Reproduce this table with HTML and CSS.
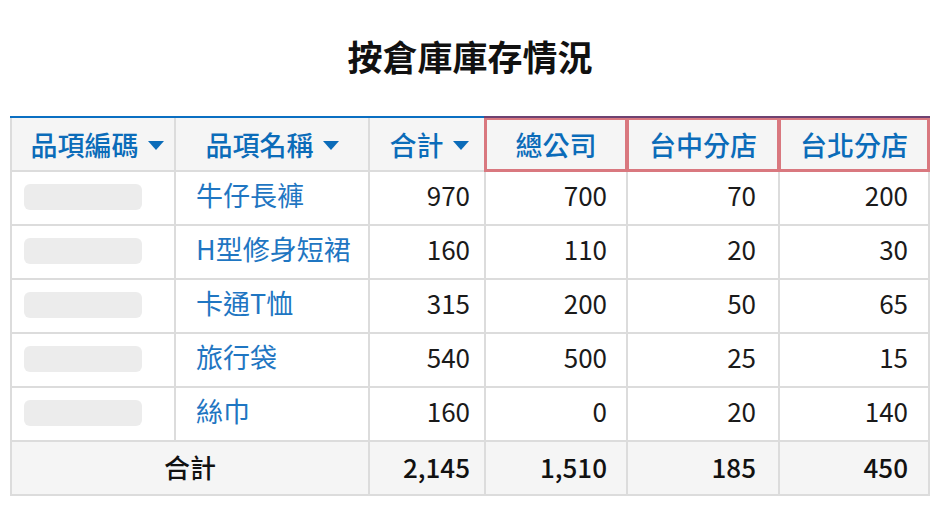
FILE: index.html
```html
<!DOCTYPE html>
<html lang="zh-Hant">
<head>
<meta charset="utf-8">
<title>按倉庫庫存情況</title>
<link rel="stylesheet" href="styles.css">
</head>
<body>
<div class="page">
  <h1 class="title">按倉庫庫存情況</h1>
  <div class="sheet">
    <div class="hd first">品項編碼<span class="caret"></span></div>
    <div class="hd">品項名稱<span class="caret"></span></div>
    <div class="hd third">合計<span class="caret"></span></div>
    <div class="hd hl">總公司</div>
    <div class="hd hl">台中分店</div>
    <div class="hd hl">台北分店</div>

    <div class="cell code"><span class="ph"></span></div>
    <div class="cell name">牛仔長褲</div>
    <div class="cell num c3">970</div>
    <div class="cell num c4">700</div>
    <div class="cell num c5">70</div>
    <div class="cell num c6">200</div>

    <div class="cell code"><span class="ph"></span></div>
    <div class="cell name">H型修身短裙</div>
    <div class="cell num c3">160</div>
    <div class="cell num c4">110</div>
    <div class="cell num c5">20</div>
    <div class="cell num c6">30</div>

    <div class="cell code"><span class="ph"></span></div>
    <div class="cell name">卡通T恤</div>
    <div class="cell num c3">315</div>
    <div class="cell num c4">200</div>
    <div class="cell num c5">50</div>
    <div class="cell num c6">65</div>

    <div class="cell code"><span class="ph"></span></div>
    <div class="cell name">旅行袋</div>
    <div class="cell num c3">540</div>
    <div class="cell num c4">500</div>
    <div class="cell num c5">25</div>
    <div class="cell num c6">15</div>

    <div class="cell code"><span class="ph"></span></div>
    <div class="cell name">絲巾</div>
    <div class="cell num c3">160</div>
    <div class="cell num c4">0</div>
    <div class="cell num c5">20</div>
    <div class="cell num c6">140</div>

    <div class="ft label">合計</div>
    <div class="ft num c3">2,145</div>
    <div class="ft num c4">1,510</div>
    <div class="ft num c5">185</div>
    <div class="ft num c6">450</div>
  </div>
</div>
</body>
</html>
```

FILE: styles.css
```css
html, body {
  margin: 0;
  padding: 0;
  background: #ffffff;
}

body {
  font-family: "Noto Sans CJK TC", "Noto Sans", sans-serif;
  color: #1a1a1a;
}

.page {
  padding: 38px 0 0 10px;
  width: 920px;
}

.title {
  margin: 0;
  font-size: 35px;
  line-height: 36px;
  font-weight: 700;
  text-align: center;
  color: #111111;
}

.sheet {
  margin-top: 42px;
  width: 916px;
  display: grid;
  grid-template-columns: 162px 192px 114px 140px 150px 148px;
  grid-auto-rows: 52px;
  gap: 2px;
  background: #dcdcdc;
  border-top: 2px solid #0a6fc2;
  padding: 0 2px 2px 2px;
}

.hd {
  background: #f5f5f5;
  color: #0b6cb9;
  font-size: 27px;
  font-weight: 500;
  display: flex;
  align-items: center;
  justify-content: center;
}

.hd.first {
  padding-left: 8px;
}

.hd.third {
  padding-left: 4px;
}

.caret {
  display: inline-block;
  width: 0;
  height: 0;
  margin-left: 9px;
  border-left: 8px solid transparent;
  border-right: 8px solid transparent;
  border-top: 9px solid #0b6cb9;
  margin-top: 2px;
}

.hl {
  position: relative;
}

.hl::before {
  content: "";
  position: absolute;
  top: -2px;
  left: -2px;
  right: -2px;
  height: 2px;
  background: #6d4272;
}

.hl::after {
  content: "";
  position: absolute;
  top: 0;
  left: -2px;
  right: -2px;
  bottom: -2px;
  border: 3px solid #d9787f;
  border-top-width: 2px;
}

.cell {
  background: #ffffff;
  font-size: 26px;
  display: flex;
  align-items: center;
  padding-bottom: 7px;
}

.cell.code {
  padding-bottom: 2px;
}

.ph {
  display: block;
  margin-left: 12px;
  width: 118px;
  height: 26px;
  border-radius: 6px;
  background: #ececec;
}

.name {
  color: #1f76c2;
  font-size: 27px;
  padding-left: 20px;
  padding-bottom: 8px;
}

.num {
  justify-content: flex-end;
}

.c3 { padding-right: 14px; }
.c4 { padding-right: 19px; }
.c5 { padding-right: 22px; }
.c6 { padding-right: 20px; }

.ft {
  background: #f5f5f5;
  font-size: 26px;
  font-weight: 500;
  color: #111111;
  display: flex;
  align-items: center;
  padding-bottom: 4px;
}

.label {
  grid-column: span 2;
  justify-content: center;
  padding-bottom: 3px;
}
```
